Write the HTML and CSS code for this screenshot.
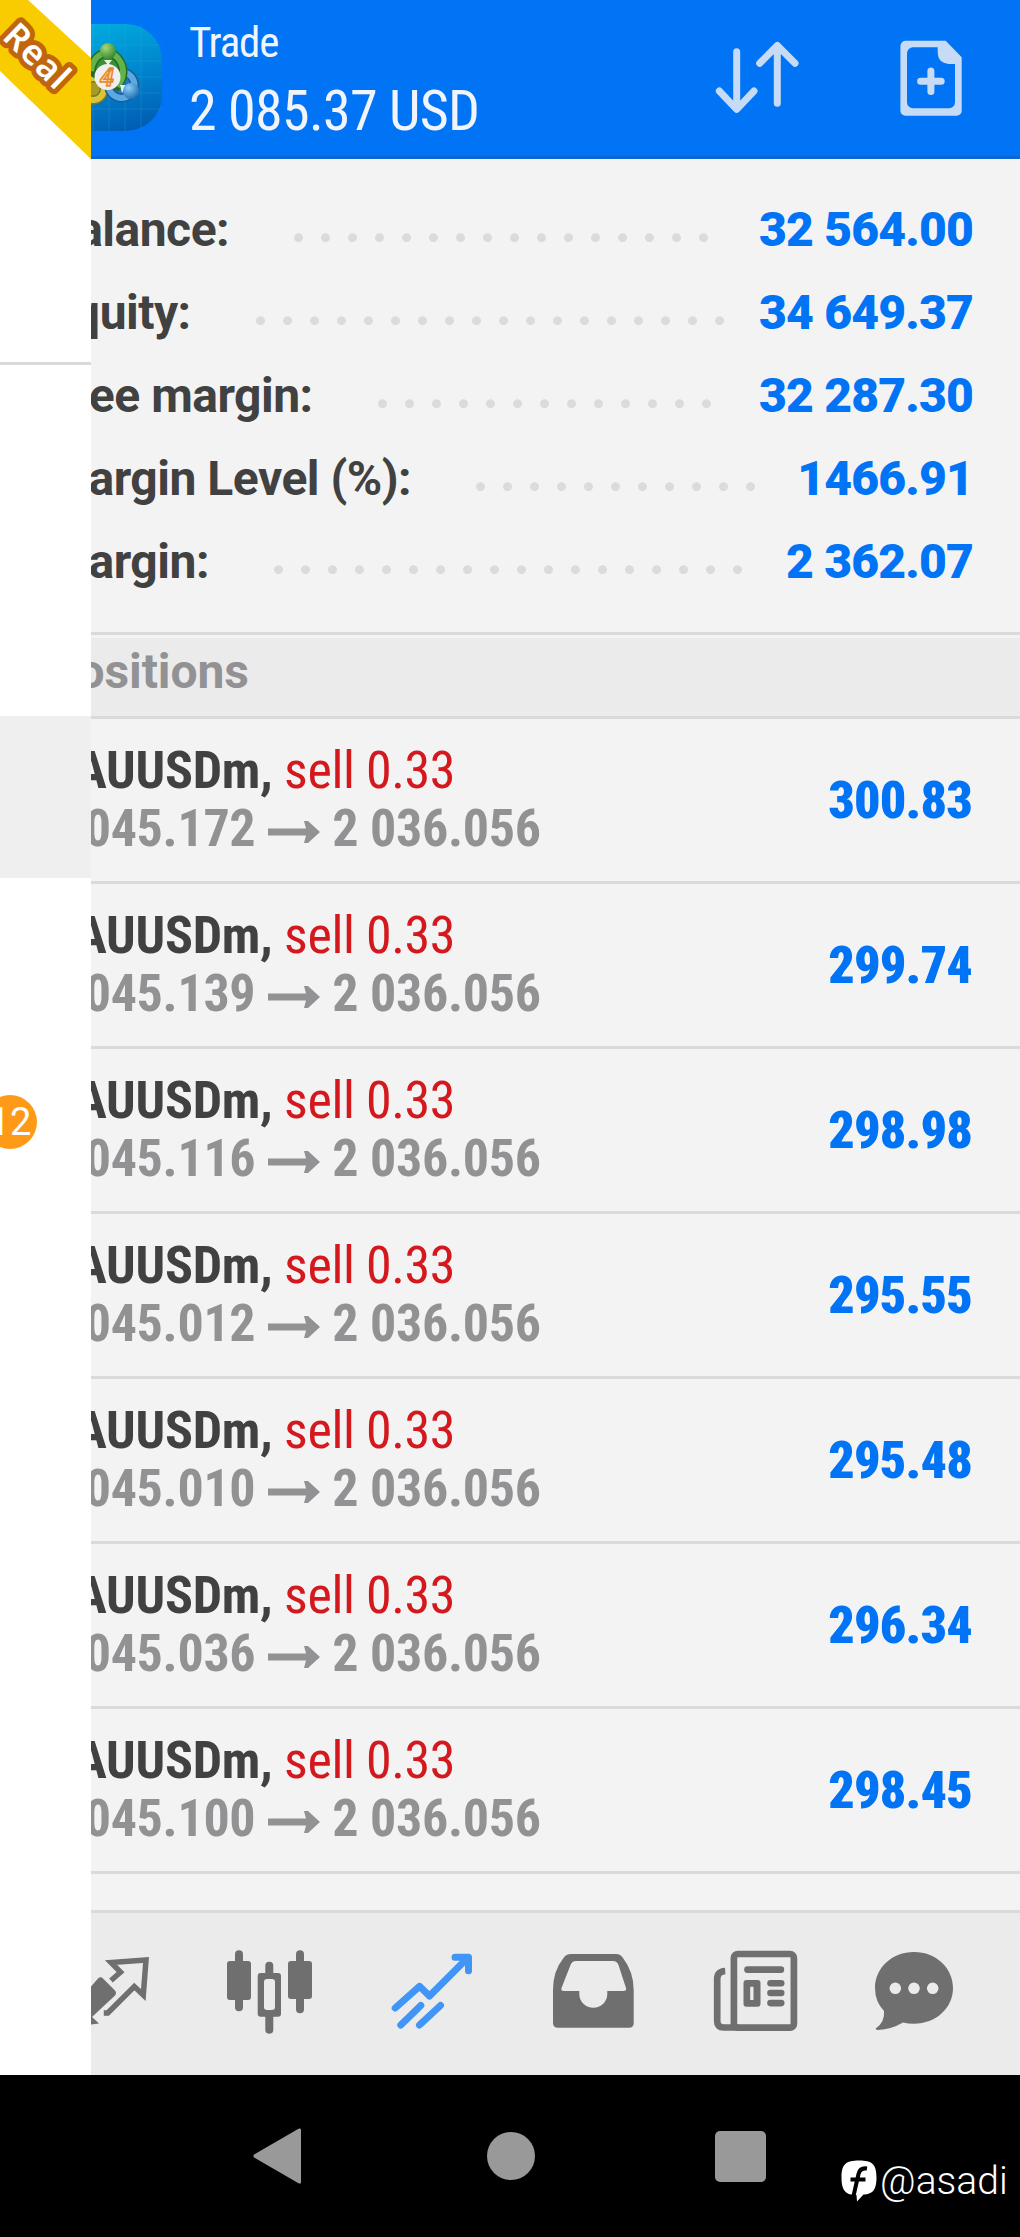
FILE: index.html
```
<!DOCTYPE html>
<html lang="en">
<head>
<meta charset="utf-8">
<title>Trade</title>
<link rel="stylesheet" href="styles.css">
</head>
<body>
<div class="screen">
  <header class="topbar">
    <svg class="app-icon" viewBox="55 24 107 107">
      <defs>
        <linearGradient id="bg" x1="0.3" y1="0" x2="0.6" y2="1"><stop offset="0" stop-color="#00acdf"/><stop offset=".5" stop-color="#0088cf"/><stop offset="1" stop-color="#005fb4"/></linearGradient>
        <radialGradient id="green" cx=".35" cy=".3" r=".8"><stop offset="0" stop-color="#a5d873"/><stop offset="1" stop-color="#2d7f2e"/></radialGradient>
        <radialGradient id="blue" cx=".35" cy=".3" r=".8"><stop offset="0" stop-color="#8fd0f7"/><stop offset="1" stop-color="#1767ae"/></radialGradient>
      </defs>
      <rect x="55" y="24" width="107" height="107" rx="36" fill="url(#bg)"/>
      <path d="M93 24v107M109 24v107M125 24v107M141 24v107M55 45h107M55 61h107M55 77h107M55 93h107M55 109h107" stroke="#4dbcf0" stroke-opacity=".18" stroke-width="1" fill="none"/>
      <circle cx="93" cy="89" r="11" fill="#a89b24" stroke="#7d7a1f" stroke-width="9"/>
      <circle cx="93" cy="89" r="11" fill="none" stroke="#d9c43c" stroke-width="6"/>
      <circle cx="121.500" cy="85" r="13" fill="#2277bd" stroke="#1a5c98" stroke-width="9"/>
      <circle cx="121.500" cy="85" r="13" fill="none" stroke="#5aa9e2" stroke-width="6"/>
      <path d="M91 71C93 57 101 53 108 53s15 8 15 19q0 8-6 14z" fill="#3c8d35" stroke="#226a2c" stroke-width="9"/>
      <path d="M91 71C93 57 101 53 108 53s15 8 15 19q0 8-6 14" fill="none" stroke="#62b449" stroke-width="6"/>
      <path d="M120 85h6l-4 8z" fill="#e6f4fc"/>
      <path d="M104 60h8l-4 5z" fill="#e3f5da"/>
      <circle cx="108" cy="51" r="8" fill="url(#green)"/>
      <circle cx="131" cy="91" r="8" fill="url(#blue)"/>
      <circle cx="107.500" cy="77" r="13" fill="#f0eff0"/>
      <text class="app-icon-digit" x="107" y="86">4</text>
    </svg>
    <div class="titles">
      <h1>Trade</h1>
      <p>2 085.37 USD</p>
    </div>
    <svg class="icon-sort" viewBox="712 38 90 80">
      <path d="M736.700 51.700v57M719.300 91l17.400 18.300L754 91M777.300 103.300V46M759.700 63.300l17.600-17.800L795 63.300"/>
    </svg>
    <svg class="icon-order" viewBox="897 38 70 80">
      <path fill-rule="evenodd" d="M907 40.700h39.700l16 16.600v53.400a5 5 0 0 1-5 5H906.400a5 5 0 0 1-5-5V46a5.300 5.300 0 0 1 5.600-5.300zM914 47.300a6 6 0 0 0-6 6v49a6 6 0 0 0 6 6h36a6 6 0 0 0 6-6V64h-6q-11.500-1-11.300-12.500v-4.200z"/>
      <path class="plus" d="M921.600 81.300h20.600M931.900 71v20.600"/>
    </svg>
  </header>

  <section class="summary">
    <div class="line"><span class="label">Balance:</span><i class="dots" style="width:432px"></i><b>32 564.00</b></div>
    <div class="line"><span class="label">Equity:</span><i class="dots" style="width:486px"></i><b>34 649.37</b></div>
    <div class="line"><span class="label">Free margin:</span><i class="dots" style="width:351px"></i><b>32 287.30</b></div>
    <div class="line"><span class="label">Margin Level (%):</span><i class="dots" style="width:297px"></i><b>1466.91</b></div>
    <div class="line"><span class="label">Margin:</span><i class="dots" style="width:486px"></i><b>2 362.07</b></div>
  </section>

  <h2 class="section">Positions</h2>

  <main class="positions">
    <div class="row"><div><p class="sym">XAUUSDm, <span>sell 0.33</span></p><p class="px">2 045.172<svg class="arrow" viewBox="0 0 52 22"><path d="M0 7.500h38L36 0h4l12 11-12 11h-4l2-7.500H0z"/></svg>2 036.056</p></div><b>300.83</b></div>
    <div class="row"><div><p class="sym">XAUUSDm, <span>sell 0.33</span></p><p class="px">2 045.139<svg class="arrow" viewBox="0 0 52 22"><path d="M0 7.500h38L36 0h4l12 11-12 11h-4l2-7.500H0z"/></svg>2 036.056</p></div><b>299.74</b></div>
    <div class="row"><div><p class="sym">XAUUSDm, <span>sell 0.33</span></p><p class="px">2 045.116<svg class="arrow" viewBox="0 0 52 22"><path d="M0 7.500h38L36 0h4l12 11-12 11h-4l2-7.500H0z"/></svg>2 036.056</p></div><b>298.98</b></div>
    <div class="row"><div><p class="sym">XAUUSDm, <span>sell 0.33</span></p><p class="px">2 045.012<svg class="arrow" viewBox="0 0 52 22"><path d="M0 7.500h38L36 0h4l12 11-12 11h-4l2-7.500H0z"/></svg>2 036.056</p></div><b>295.55</b></div>
    <div class="row"><div><p class="sym">XAUUSDm, <span>sell 0.33</span></p><p class="px">2 045.010<svg class="arrow" viewBox="0 0 52 22"><path d="M0 7.500h38L36 0h4l12 11-12 11h-4l2-7.500H0z"/></svg>2 036.056</p></div><b>295.48</b></div>
    <div class="row"><div><p class="sym">XAUUSDm, <span>sell 0.33</span></p><p class="px">2 045.036<svg class="arrow" viewBox="0 0 52 22"><path d="M0 7.500h38L36 0h4l12 11-12 11h-4l2-7.500H0z"/></svg>2 036.056</p></div><b>296.34</b></div>
    <div class="row"><div><p class="sym">XAUUSDm, <span>sell 0.33</span></p><p class="px">2 045.100<svg class="arrow" viewBox="0 0 52 22"><path d="M0 7.500h38L36 0h4l12 11-12 11h-4l2-7.500H0z"/></svg>2 036.056</p></div><b>298.45</b></div>
  </main>

  <nav class="tabs">
    <svg viewBox="58.500 1944 100 100">
      <path class="line55" d="M110.500 1980.500l9.500-8.300-9.500-9.700 35-2.500-2.700 35-9-8.500-26.500 26.500h-4"/>
      <path d="M97.500 1978.500q2.500-2.500 5 0l12 12q2 2.500 0 5L91.500 2017l7 6.500-31 4 3-32 7 6z"/>
    </svg>
    <svg viewBox="220 1944 100 100">
      <rect x="227" y="1961" width="24" height="39" rx="3"/><rect x="235" y="1950.300" width="8" height="61" rx="4"/>
      <path fill-rule="evenodd" d="M260.700 1973h17.300a3 3 0 0 1 3 3v37.700a3 3 0 0 1-3 3h-17.300a3 3 0 0 1-3-3V1976a3 3 0 0 1 3-3zM267 1979a3 3 0 0 0-3 3v25a3 3 0 0 0 3 3h5a3 3 0 0 0 3-3v-25a3 3 0 0 0-3-3z"/>
      <path d="M265.300 1974v-8.300a4 4 0 0 1 8 0v8.300zM265.300 2016h8v13.700a4 4 0 0 1-8 0z"/>
      <rect x="288" y="1961" width="24" height="38" rx="3"/><rect x="296" y="1950.300" width="8" height="63" rx="4"/>
    </svg>
    <svg class="active" viewBox="381.500 1944 100 100">
      <path d="M394.700 2008l24.300-21.700 10 9.700 38-38M454.500 1957.200h13.500v13.500M400.300 2025l20-19.500M419 2025l21-19.500"/>
    </svg>
    <svg viewBox="543 1944 100 100">
      <path fill-rule="evenodd" d="M571 1954h45q4.500 0 7 4 10.700 14 10.700 32v33q0 4.700-4.700 4.700h-71q-5 0-5-4.700v-33q0-19 10.500-32 2.500-4 7.500-4zM576 1961q-4 0-5.500 4l-9 23q-1 3 2.500 3h15.300v3a14 13.700 0 0 0 28 0v-3H623q4 0 3-3l-7.500-23q-1.500-4-5.500-4z"/>
    </svg>
    <svg viewBox="704.500 1944 100 100">
      <path class="line67" d="M724.700 1971q-8 .5-8 8v42q0 6.500 6.500 6.500h15"/>
      <rect class="line67" x="733.400" y="1954" width="60" height="73.700" rx="4"/>
      <rect x="743.700" y="1966.300" width="40" height="6.700" rx="3.300"/>
      <path fill-rule="evenodd" d="M746 1980h11a3 3 0 0 1 3 3v20.700a3 3 0 0 1-3 3h-11a3 3 0 0 1-3-3V1983a3 3 0 0 1 3-3zM749.700 1986.700v13.300h3.300v-13.300z"/>
      <rect x="766.700" y="1980" width="17.300" height="6.500" rx="3.200"/><rect x="766.700" y="1989.800" width="17.300" height="6.500" rx="3.200"/><rect x="766.700" y="1999.700" width="17.300" height="6.700" rx="3.300"/>
    </svg>
    <svg viewBox="866 1944 100 100">
      <path fill-rule="evenodd" d="M914 1952c22 0 39 16 39 36s-17 35.700-39 35.700q-6 0-11-1.200-12 7-25 7.500-3 0-2-1.700 9-6.300 8-17.300-9-9.500-9-23c0-20 17-36 39-36zM889.500 1988.300a5.800 5.800 0 1 0 11.600 0a5.800 5.800 0 1 0-11.600 0zM908.200 1988.300a5.800 5.800 0 1 0 11.600 0a5.800 5.800 0 1 0-11.600 0zM926.900 1988.300a5.800 5.800 0 1 0 11.600 0a5.800 5.800 0 1 0-11.600 0z"/>
    </svg>
  </nav>

  <footer class="sysbar">
    <svg class="back" viewBox="0 0 48 56"><path d="M46.500 2.500v51L2.500 28z"/></svg>
    <i class="home"></i>
    <i class="recent"></i>
    <div class="credit">
      <svg viewBox="0 0 36 42"><path fill="#fff" d="M18 .5C31 .5 35.500 4 35.500 17.500S31 34 22.500 34.500l-6.500 7-.5-6.500C5 35 .5 31 .5 17.500S5 .5 18 .5z"/><path fill="none" stroke="#000" stroke-width="4" d="M12.500 36L17.500 14q1.500-6.500 8.500-5.500M9.500 19.500h15"/></svg>
      <span>@asadi</span>
    </div>
  </footer>

  <aside class="drawer">
    <svg class="ribbon" viewBox="0 0 91 160">
      <path d="M0 0h28l63 58v101L0 71z" fill="#f8cc00"/>
      <text x="0" y="0" transform="translate(1 38) rotate(44)">Real</text>
    </svg>
    <div class="account"></div>
    <div class="selected"></div>
    <span class="badge">12</span>
  </aside>
</div>
</body>
</html>
```
FILE: styles.css
```
* { box-sizing: border-box; margin: 0; padding: 0; }
body { width: 1020px; height: 2237px; overflow: hidden; background: #f3f3f3; font-family: Roboto, sans-serif; }
svg { display: block; flex: none; }
.screen { position: relative; width: 1020px; height: 2237px; overflow: hidden; display: flex; flex-direction: column; }

.topbar { height: 159px; flex: none; display: flex; align-items: flex-start; background: #0074f5; border-bottom: 3px solid #0b66d6; padding-left: 55px; }
.app-icon { width: 107px; height: 107px; margin-top: 24px; }
.app-icon-digit { font: italic 700 25px Roboto, sans-serif; text-anchor: middle; fill: #fbd9a8; stroke: #e58a2c; stroke-width: 1.5px; }
.titles { width: 550px; padding: 17px 0 0 27px; font-family: "Roboto Condensed", Roboto, sans-serif; color: #f1f5fb; }
.titles h1 { font-size: 43px; line-height: 50px; font-weight: 450; letter-spacing: -1.2px; }
.titles p { margin-top: 11px; font-size: 56px; line-height: 66px; font-weight: 450; letter-spacing: -0.7px; white-space: nowrap; }
.icon-sort { width: 90px; height: 80px; margin-top: 38px; fill: none; stroke: #c5dbf6; stroke-width: 7px; stroke-linecap: round; stroke-linejoin: round; }
.icon-order { width: 70px; height: 80px; margin: 38px 0 0 94px; fill: #c5dbf6; }
.plus { stroke: #c5dbf6; stroke-width: 7px; stroke-linecap: round; }

.summary { height: 473px; flex: none; padding: 29px 47px 0 47px; }
.line { display: flex; height: 83px; font-size: 48px; line-height: 83px; font-weight: 700; letter-spacing: -0.5px; color: #414141; white-space: nowrap; }
.line b { margin-left: auto; color: #0074f5; letter-spacing: -0.8px; }
.dots { margin-left: 56px; height: 83px; background: radial-gradient(circle at 13.500px 49.700px, #dbdbdb 4px, transparent 4.800px) 0 0 / 27px 83px repeat-x; }

.section { height: 87px; flex: none; border-top: 3px solid #dadada; border-bottom: 3px solid #dadada; background: linear-gradient(#f3f3f3 3px, #ebebeb 3px); padding: 3px 0 0 47px; font-size: 48px; line-height: 67px; font-weight: 700; letter-spacing: -0.1px; color: #929294; }

.positions { height: 1191px; flex: none; font-family: "Roboto Condensed", Roboto, sans-serif; font-weight: 700; font-size: 52px; }
.row { height: 165px; display: flex; align-items: center; justify-content: space-between; padding: 0 48px 0 47px; border-bottom: 3px solid #dadada; white-space: nowrap; }
.row p { line-height: 58px; }
.row > div { align-self: flex-start; padding-top: 23px; }
.row b { color: #0074f5; letter-spacing: -0.8px; }
.sym { color: #414141; letter-spacing: -0.3px; }
.sym span { font-weight: 400; color: #d3181e; letter-spacing: -0.4px; }
.px { display: flex; color: #929294; letter-spacing: -0.3px; }
.arrow { width: 52px; height: 22px; margin: 21px 12px 0 13px; fill: #929294; }

.tabs { height: 165px; flex: none; display: flex; align-items: center; gap: 61.500px; padding-left: 58.500px; border-top: 3px solid #dadada; background: #ebebeb; fill: #6f6f6f; }
.tabs svg { width: 100px; height: 100px; }
.line55 { fill: none; stroke: #6f6f6f; stroke-width: 5.500px; }
.line67 { fill: none; stroke: #6f6f6f; stroke-width: 6.700px; }
.tabs .active { fill: none; stroke: #4095f7; stroke-width: 7px; stroke-linecap: round; stroke-linejoin: round; }

.sysbar { height: 162px; flex: none; display: flex; align-items: center; background: #000; padding-left: 253px; }
.back { width: 48px; height: 56px; fill: #999; stroke: #999; stroke-width: 4px; stroke-linejoin: round; }
.home { width: 48px; height: 48px; border-radius: 50%; background: #999; margin-left: 185.500px; }
.recent { width: 51px; height: 51px; border-radius: 5px; background: #999; margin-left: 180.500px; }
.credit { display: flex; align-items: center; margin: 50px 0 0 75px; color: #fff; font-size: 39px; line-height: 46px; font-weight: 350; }
.credit svg { width: 36px; height: 42px; margin-right: 3px; }

.drawer { position: absolute; left: 0; top: 0; width: 91px; height: 2075px; background: #fff; overflow: hidden; }
.ribbon { width: 91px; height: 160px; }
.ribbon text { font: 600 35px "Noto Sans", "Open Sans", sans-serif; fill: #fff; stroke: #c1660c; stroke-width: 10px; stroke-linejoin: round; paint-order: stroke; letter-spacing: 1px; }
.account { height: 205px; border-bottom: 3px solid #d9d9d9; }
.selected { margin-top: 351px; height: 162px; background: #efefef; }
.badge { display: block; width: 54px; height: 54px; margin: 217px 0 0 -17px; border-radius: 50%; background: #fe9a17; color: #fff; font-size: 38px; line-height: 54px; text-align: center; }
```
